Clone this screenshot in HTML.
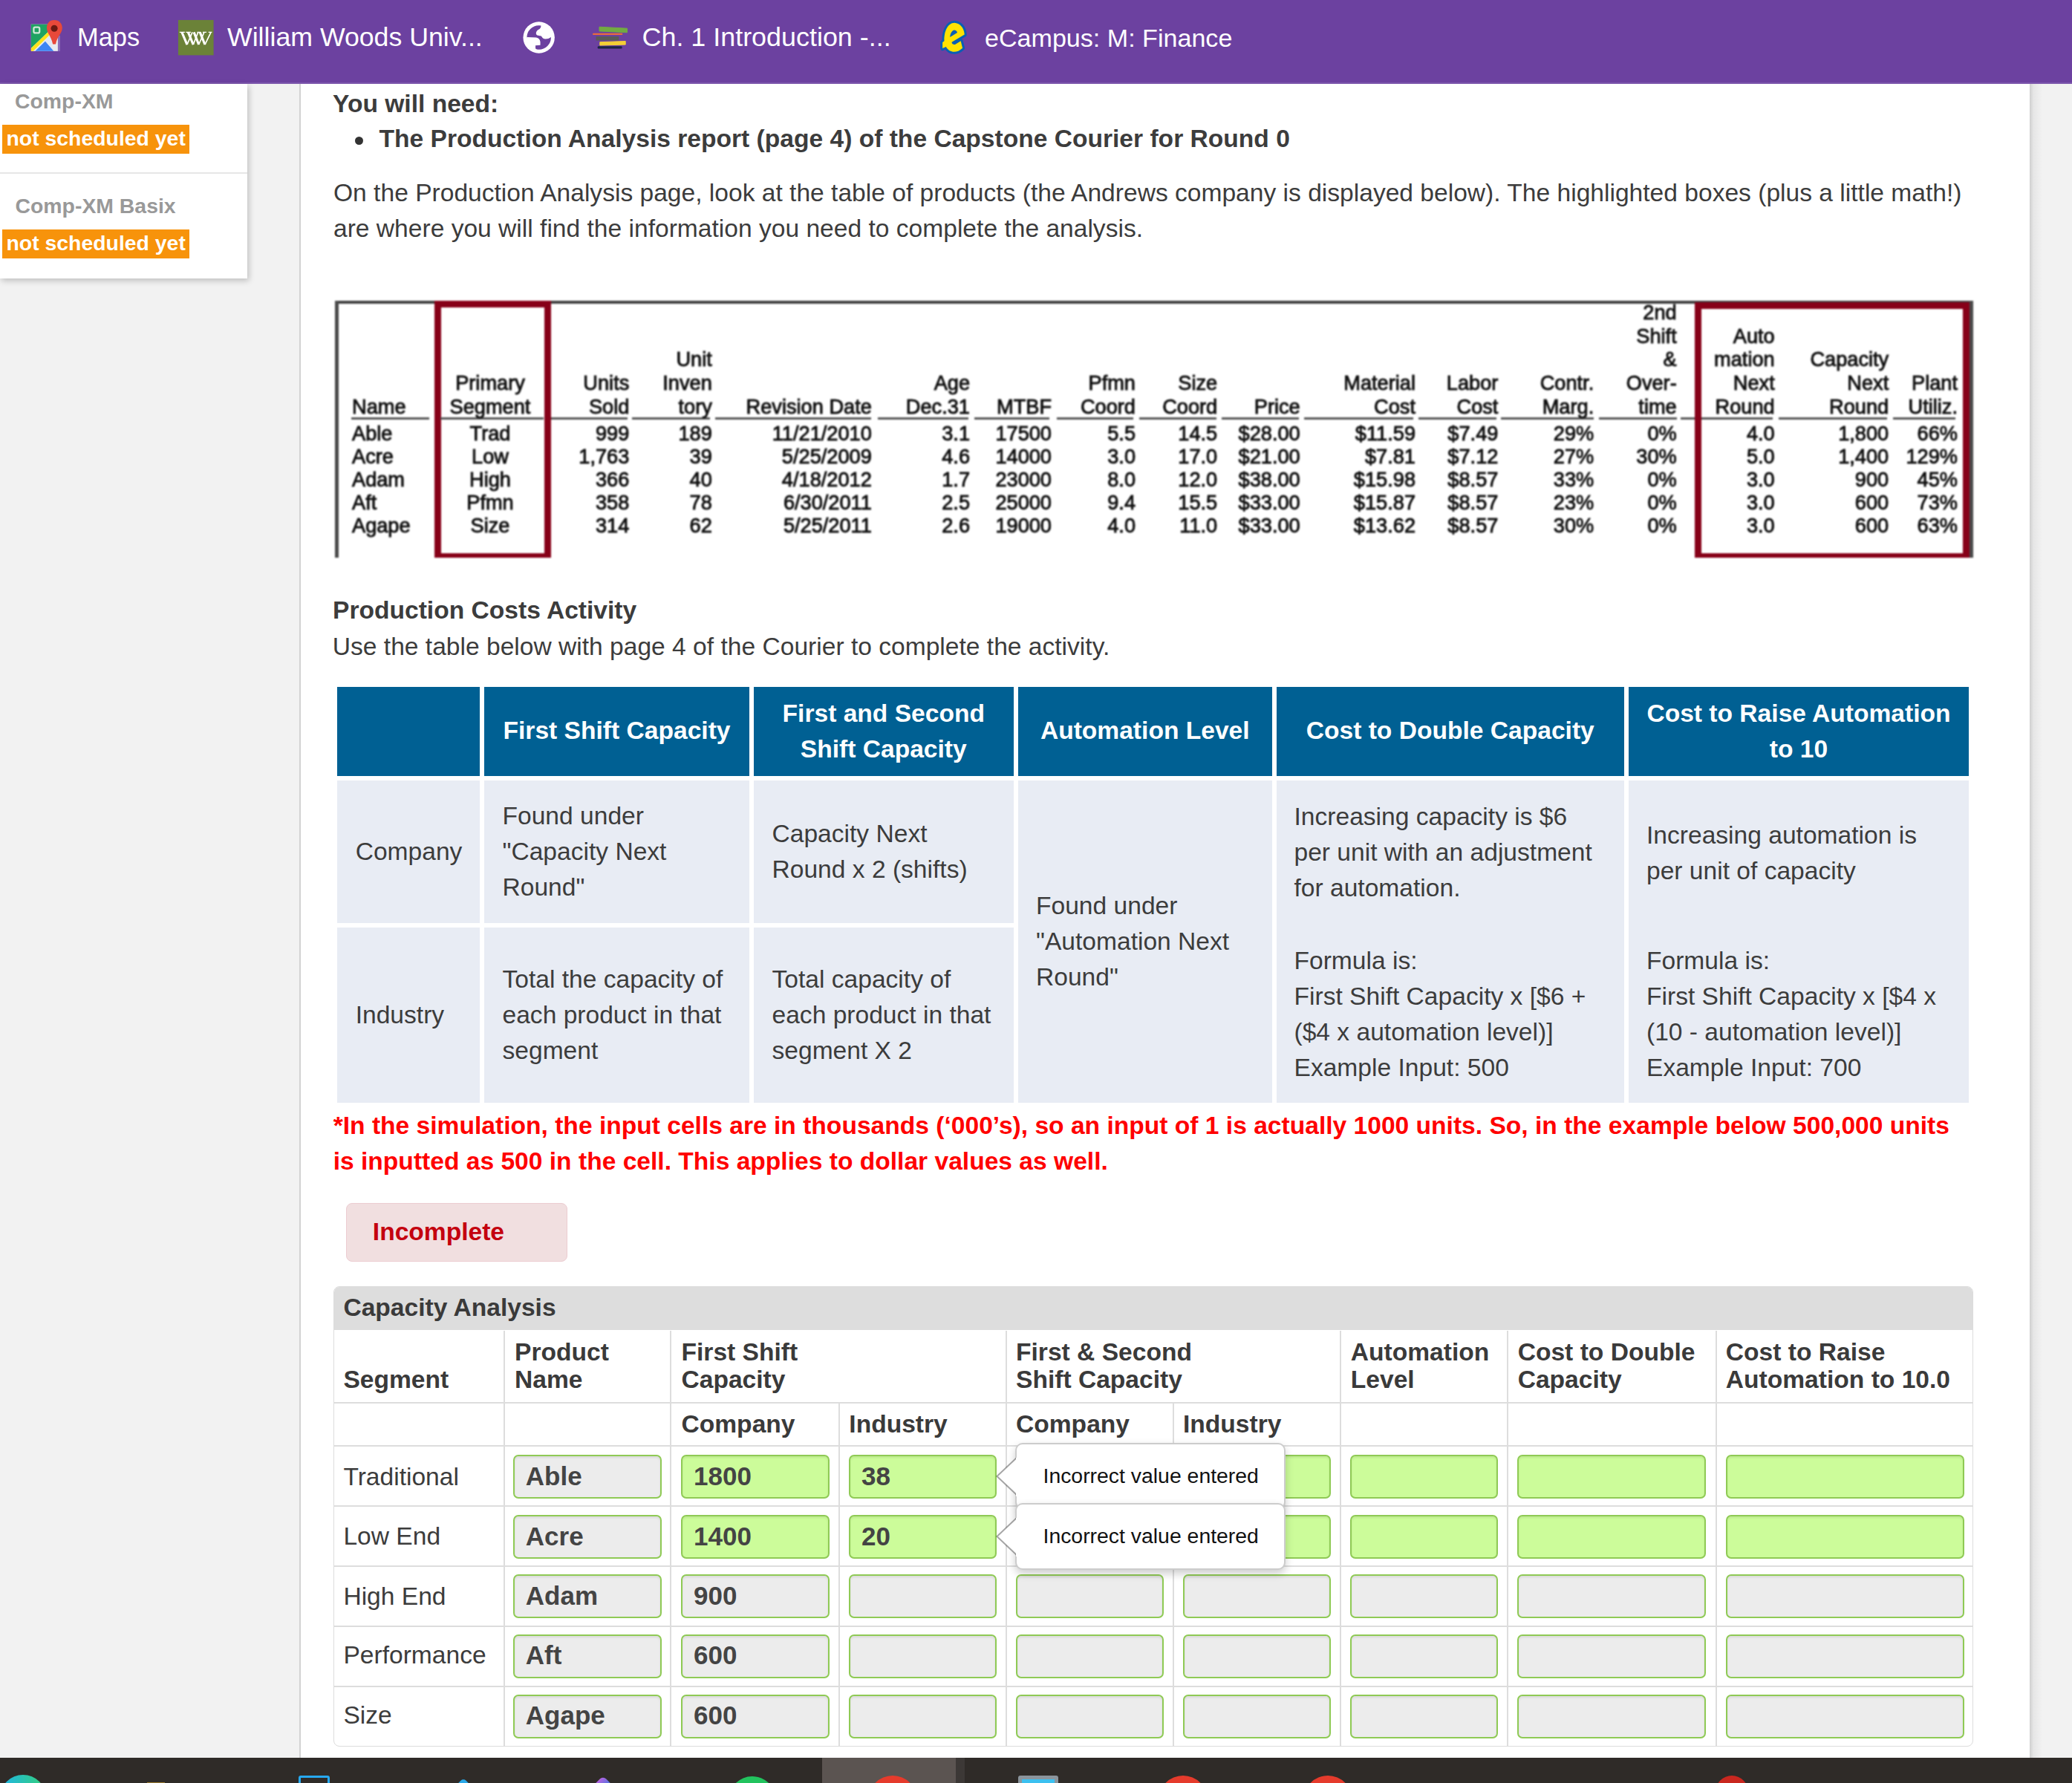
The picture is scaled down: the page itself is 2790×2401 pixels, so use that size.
<!DOCTYPE html>
<html><head><meta charset="utf-8"><title>Production Costs Activity</title>
<style>
html,body{margin:0;padding:0;}
body{width:2790px;height:2401px;overflow:hidden;position:relative;background:#f2f2f2;font-family:"Liberation Sans",sans-serif;color:#333;}
.t{position:absolute;white-space:nowrap;}
.r{position:absolute;box-sizing:border-box;}
.it{color:#151515;}
.tb{-webkit-text-stroke:0.9px #0e0e0e;}
</style></head><body>

<div class="r" style="left:0.00px;top:0.00px;width:2790.00px;height:113.00px;background:#6c41a0;"></div>
<div class="r" style="left:0.00px;top:111.00px;width:2790.00px;height:2.00px;background:#7d58ad;"></div>
<div class="t" style="left:104.00px;top:29.28px;font-size:34.4px;line-height:43.0px;color:#fff;">Maps</div>
<div class="t" style="left:306.00px;top:28.02px;font-size:35.7px;line-height:44.62px;color:#fff;">William Woods Univ...</div>
<div class="t" style="left:864.50px;top:27.82px;font-size:35.9px;line-height:44.88px;color:#fff;">Ch. 1 Introduction -...</div>
<div class="t" style="left:1326.00px;top:29.57px;font-size:34.1px;line-height:42.62px;color:#fff;">eCampus: M: Finance</div>
<svg class="r" style="left:35px;top:22px" width="60" height="58" viewBox="0 0 1844 1783">
<rect x="210" y="330" width="1110" height="1110" fill="#e9ecef"/>
<polygon points="210,330 900,330 900,660 210,1320" fill="#1ea362"/>
<polygon points="210,1320 900,660 960,700 960,790 300,1440 210,1440" fill="#ffe31a"/>
<polygon points="380,1440 800,1030 1150,1440" fill="#3d86f5"/>
<polygon points="800,1030 960,790 1060,880 1060,1250 1150,1440" fill="#dfe8f5"/>
<rect x="1320" y="800" width="90" height="640" fill="#8a70b8"/>
<path d="M1170 150 C1380 150 1500 300 1500 480 C1500 700 1300 820 1230 1150 L1110 1150 C1040 820 860 700 860 480 C860 300 960 150 1170 150 Z" fill="#e8493a"/>
<circle cx="1170" cy="500" r="140" fill="#6b1a12"/>
<rect x="320" y="450" width="240" height="240" rx="60" fill="none" stroke="#cfe8d8" stroke-width="70"/>
</svg>
<svg class="r" style="left:230px;top:20px" width="70" height="60" viewBox="0 0 2072 1776">
<rect x="295" y="205" width="1410" height="1405" fill="#6b8238"/>
<g stroke="#fff" stroke-linecap="butt" fill="none">
<path d="M440,690 L650,1185 M690,690 L895,1185 M920,690 L1115,1185 M1160,690 L1360,1185" stroke-width="92"/>
<path d="M650,1185 L860,690 M895,1185 L1090,690 M1115,1185 L1330,690 M1360,1185 L1600,690" stroke-width="50"/>
<path d="M350,690 H560 M600,690 H800 M1050,690 H1180 M1270,690 H1420 M1500,690 H1640" stroke-width="40"/>
</g>
</svg>
<svg class="r" style="left:695px;top:22px" width="60" height="58" viewBox="0 0 1844 1783">
<circle cx="942" cy="877" r="652" fill="#fff"/>
<circle cx="942" cy="877" r="500" fill="#6c41a0"/>
<path d="M1030 370 C1030 470 990 520 930 545 C860 580 815 650 825 720 C835 790 930 800 1010 805 C1060 815 1080 880 1110 910 C1180 960 1340 940 1445 860 L1520 700 L1400 420 L1100 330 Z" fill="#fff"/>
<path d="M440 860 L830 875 C930 890 990 960 1000 1060 L1000 1195 L800 1210 L800 1330 L880 1400 L560 1300 L420 1000 Z" fill="#fff"/>
</svg>
<svg class="r" style="left:797px;top:35px" width="49" height="32" viewBox="0 0 49 32">
<polygon points="10,1.2 47.5,3.2 47.5,8.8 10,6.9" fill="#72aa42" stroke="#72aa42" stroke-width="1" stroke-linejoin="round"/>
<rect x="1" y="9.8" width="40.3" height="2.3" rx="1" fill="#e96a3e"/>
<rect x="5.5" y="14.1" width="30.8" height="5.4" fill="#5a5a57"/>
<polygon points="10.8,21.7 45.2,20.5 45.2,25.1 10.8,26" fill="#f4cf35" stroke="#f4cf35" stroke-width="1" stroke-linejoin="round"/>
<rect x="7.7" y="27.3" width="32.9" height="3.1" rx="1.2" fill="#1c2544"/>
</svg>
<svg class="r" style="left:1255px;top:20px" width="60" height="60" viewBox="0 0 1783 1783">
<path d="M900,320 C1100,330 1280,500 1300,790 L790,1090 C780,1160 850,1200 920,1190 L1150,1050 L1220,1330 C1100,1440 1000,1480 880,1480 C760,1480 640,1420 560,1280 L420,1340 L420,1100 L490,1050 C480,700 600,330 900,320 Z" fill="#0a5fb4" stroke="#0a5fb4" stroke-width="180" stroke-linejoin="round"/>
<path d="M900,320 C1100,330 1280,500 1300,790 L790,1090 C780,1160 850,1200 920,1190 L1150,1050 L1220,1330 C1100,1440 1000,1480 880,1480 C760,1480 640,1420 560,1280 L420,1340 L420,1100 L490,1050 C480,700 600,330 900,320 Z" fill="#ffe200"/>
<path d="M720,890 C720,760 800,620 890,610 C950,610 1000,650 1010,710 Z" fill="#0a5fb4"/>
</svg>
<div class="r" style="left:404.00px;top:113.00px;width:2329.00px;height:2254.00px;background:#fff;"></div>
<div class="r" style="left:403.00px;top:113.00px;width:2.00px;height:2254.00px;background:#d2d2d2;"></div>
<div class="r" style="left:2733.00px;top:113.00px;width:17.00px;height:2254.00px;background:linear-gradient(to right,#cfcfcf,#e6e6e6 30%,#f2f2f2);"></div>
<div class="r" style="left:0;top:113px;width:333px;height:262px;background:#fff;box-shadow:2px 3px 8px rgba(0,0,0,.22);"></div>
<div class="t" style="left:20.00px;top:119.01px;font-size:28.4px;line-height:35.5px;font-weight:bold;color:#999;">Comp-XM</div>
<div class="r" style="left:3.00px;top:168.00px;width:252.00px;height:39.00px;background:#f7930b;"></div>
<div class="t" style="left:8.50px;top:168.71px;font-size:28.4px;line-height:35.5px;font-weight:bold;color:#fff;">not scheduled yet</div>
<div class="r" style="left:0.00px;top:232.00px;width:333.00px;height:2.00px;background:#e6e6e6;"></div>
<div class="t" style="left:20.50px;top:259.91px;font-size:28.4px;line-height:35.5px;font-weight:bold;color:#999;">Comp-XM Basix</div>
<div class="r" style="left:3.00px;top:309.00px;width:252.00px;height:38.50px;background:#f7930b;"></div>
<div class="t" style="left:8.50px;top:309.51px;font-size:28.4px;line-height:35.5px;font-weight:bold;color:#fff;">not scheduled yet</div>
<div class="t" style="left:448.00px;top:118.66px;font-size:33.6px;line-height:42.0px;font-weight:bold;color:#3c3c3c;">You will need:</div>
<div class="r" style="left:478px;top:184px;width:11px;height:11px;border-radius:50%;background:#333;"></div>
<div class="t" style="left:510.50px;top:166.36px;font-size:33.6px;line-height:42.0px;font-weight:bold;color:#3c3c3c;">The Production Analysis report (page 4) of the Capstone Courier for Round 0</div>
<div class="t" style="left:449.00px;top:239.16px;font-size:33.6px;line-height:42.0px;color:#3c3c3c;">On the Production Analysis page, look at the table of products (the Andrews company is displayed below). The highlighted boxes (plus a little math!)</div>
<div class="t" style="left:449.00px;top:286.76px;font-size:33.6px;line-height:42.0px;color:#3c3c3c;">are where you will find the information you need to complete the analysis.</div>
<div style="position:absolute;left:0;top:0;width:2790px;height:800px;filter:blur(0.8px);">
<div class="r" style="left:451.00px;top:405.00px;width:2206.00px;height:3.50px;background:#404040;"></div>
<div class="r" style="left:451.00px;top:405.00px;width:4.50px;height:346.00px;background:#4a4a4a;"></div>
<div class="r" style="left:2652.00px;top:405.00px;width:5.00px;height:346.00px;background:#4a4a4a;"></div>
<div class="r" style="left:584.5px;top:405px;width:157px;height:346px;border:9px solid #870018;border-bottom-width:6.5px;"></div>
<div class="r" style="left:2281.5px;top:407px;width:370px;height:344px;border:9px solid #870018;border-bottom-width:6.5px;"></div>
<div class="r" style="left:473.00px;top:562.30px;width:105.40px;height:2.30px;background:#555;"></div>
<div class="r" style="left:593.00px;top:562.30px;width:139.00px;height:2.30px;background:#555;"></div>
<div class="r" style="left:741.50px;top:562.30px;width:103.20px;height:2.30px;background:#555;"></div>
<div class="r" style="left:851.30px;top:562.30px;width:104.90px;height:2.30px;background:#555;"></div>
<div class="r" style="left:962.80px;top:562.30px;width:210.20px;height:2.30px;background:#555;"></div>
<div class="r" style="left:1181.60px;top:562.30px;width:122.20px;height:2.30px;background:#555;"></div>
<div class="r" style="left:1311.90px;top:562.30px;width:101.40px;height:2.30px;background:#555;"></div>
<div class="r" style="left:1423.40px;top:562.30px;width:102.80px;height:2.30px;background:#555;"></div>
<div class="r" style="left:1533.50px;top:562.30px;width:104.20px;height:2.30px;background:#555;"></div>
<div class="r" style="left:1645.00px;top:562.30px;width:104.20px;height:2.30px;background:#555;"></div>
<div class="r" style="left:1756.00px;top:562.30px;width:147.30px;height:2.30px;background:#555;"></div>
<div class="r" style="left:1909.90px;top:562.30px;width:104.90px;height:2.30px;background:#555;"></div>
<div class="r" style="left:2021.40px;top:562.30px;width:124.80px;height:2.30px;background:#555;"></div>
<div class="r" style="left:2152.80px;top:562.30px;width:104.90px;height:2.30px;background:#555;"></div>
<div class="r" style="left:2263.00px;top:562.30px;width:18.50px;height:2.30px;background:#555;"></div>
<div class="r" style="left:2290.50px;top:562.30px;width:96.30px;height:2.30px;background:#555;"></div>
<div class="r" style="left:2394.50px;top:562.30px;width:146.70px;height:2.30px;background:#555;"></div>
<div class="r" style="left:2549.00px;top:562.30px;width:84.00px;height:2.30px;background:#555;"></div>
<div class="t tb" style="left:474.00px;top:530.58px;font-size:27.2px;line-height:34.0px;color:#0e0e0e;">Name</div>
<div class="t tb" style="left:60.00px;width:1200px;top:499.08px;font-size:27.2px;line-height:34.0px;text-align:center;color:#0e0e0e;">Primary</div>
<div class="t tb" style="left:60.00px;width:1200px;top:530.58px;font-size:27.2px;line-height:34.0px;text-align:center;color:#0e0e0e;">Segment</div>
<div class="t tb" style="right:1942.70px;top:499.08px;font-size:27.2px;line-height:34.0px;text-align:right;color:#0e0e0e;">Units</div>
<div class="t tb" style="right:1942.70px;top:530.58px;font-size:27.2px;line-height:34.0px;text-align:right;color:#0e0e0e;">Sold</div>
<div class="t tb" style="right:1831.20px;top:466.88px;font-size:27.2px;line-height:34.0px;text-align:right;color:#0e0e0e;">Unit</div>
<div class="t tb" style="right:1831.20px;top:499.08px;font-size:27.2px;line-height:34.0px;text-align:right;color:#0e0e0e;">Inven</div>
<div class="t tb" style="right:1831.20px;top:530.58px;font-size:27.2px;line-height:34.0px;text-align:right;color:#0e0e0e;">tory</div>
<div class="t tb" style="right:1616.20px;top:530.58px;font-size:27.2px;line-height:34.0px;text-align:right;color:#0e0e0e;">Revision Date</div>
<div class="t tb" style="right:1484.00px;top:499.08px;font-size:27.2px;line-height:34.0px;text-align:right;color:#0e0e0e;">Age</div>
<div class="t tb" style="right:1484.00px;top:530.58px;font-size:27.2px;line-height:34.0px;text-align:right;color:#0e0e0e;">Dec.31</div>
<div class="t tb" style="right:1374.00px;top:530.58px;font-size:27.2px;line-height:34.0px;text-align:right;color:#0e0e0e;">MTBF</div>
<div class="t tb" style="right:1261.00px;top:499.08px;font-size:27.2px;line-height:34.0px;text-align:right;color:#0e0e0e;">Pfmn</div>
<div class="t tb" style="right:1261.00px;top:530.58px;font-size:27.2px;line-height:34.0px;text-align:right;color:#0e0e0e;">Coord</div>
<div class="t tb" style="right:1150.80px;top:499.08px;font-size:27.2px;line-height:34.0px;text-align:right;color:#0e0e0e;">Size</div>
<div class="t tb" style="right:1150.80px;top:530.58px;font-size:27.2px;line-height:34.0px;text-align:right;color:#0e0e0e;">Coord</div>
<div class="t tb" style="right:1039.30px;top:530.58px;font-size:27.2px;line-height:34.0px;text-align:right;color:#0e0e0e;">Price</div>
<div class="t tb" style="right:884.00px;top:499.08px;font-size:27.2px;line-height:34.0px;text-align:right;color:#0e0e0e;">Material</div>
<div class="t tb" style="right:884.00px;top:530.58px;font-size:27.2px;line-height:34.0px;text-align:right;color:#0e0e0e;">Cost</div>
<div class="t tb" style="right:772.60px;top:499.08px;font-size:27.2px;line-height:34.0px;text-align:right;color:#0e0e0e;">Labor</div>
<div class="t tb" style="right:772.60px;top:530.58px;font-size:27.2px;line-height:34.0px;text-align:right;color:#0e0e0e;">Cost</div>
<div class="t tb" style="right:643.80px;top:499.08px;font-size:27.2px;line-height:34.0px;text-align:right;color:#0e0e0e;">Contr.</div>
<div class="t tb" style="right:643.80px;top:530.58px;font-size:27.2px;line-height:34.0px;text-align:right;color:#0e0e0e;">Marg.</div>
<div class="t tb" style="right:532.30px;top:403.88px;font-size:27.2px;line-height:34.0px;text-align:right;color:#0e0e0e;">2nd</div>
<div class="t tb" style="right:532.30px;top:435.58px;font-size:27.2px;line-height:34.0px;text-align:right;color:#0e0e0e;">Shift</div>
<div class="t tb" style="right:532.30px;top:466.88px;font-size:27.2px;line-height:34.0px;text-align:right;color:#0e0e0e;">&amp;</div>
<div class="t tb" style="right:532.30px;top:499.08px;font-size:27.2px;line-height:34.0px;text-align:right;color:#0e0e0e;">Over-</div>
<div class="t tb" style="right:532.30px;top:530.58px;font-size:27.2px;line-height:34.0px;text-align:right;color:#0e0e0e;">time</div>
<div class="t tb" style="right:400.30px;top:435.58px;font-size:27.2px;line-height:34.0px;text-align:right;color:#0e0e0e;">Auto</div>
<div class="t tb" style="right:400.30px;top:466.88px;font-size:27.2px;line-height:34.0px;text-align:right;color:#0e0e0e;">mation</div>
<div class="t tb" style="right:400.30px;top:499.08px;font-size:27.2px;line-height:34.0px;text-align:right;color:#0e0e0e;">Next</div>
<div class="t tb" style="right:400.30px;top:530.58px;font-size:27.2px;line-height:34.0px;text-align:right;color:#0e0e0e;">Round</div>
<div class="t tb" style="right:246.80px;top:466.88px;font-size:27.2px;line-height:34.0px;text-align:right;color:#0e0e0e;">Capacity</div>
<div class="t tb" style="right:246.80px;top:499.08px;font-size:27.2px;line-height:34.0px;text-align:right;color:#0e0e0e;">Next</div>
<div class="t tb" style="right:246.80px;top:530.58px;font-size:27.2px;line-height:34.0px;text-align:right;color:#0e0e0e;">Round</div>
<div class="t tb" style="right:154.00px;top:499.08px;font-size:27.2px;line-height:34.0px;text-align:right;color:#0e0e0e;">Plant</div>
<div class="t tb" style="right:154.00px;top:530.58px;font-size:27.2px;line-height:34.0px;text-align:right;color:#0e0e0e;">Utiliz.</div>
<div class="t tb" style="left:474.00px;top:566.88px;font-size:27.2px;line-height:34.0px;color:#0e0e0e;">Able</div>
<div class="t tb" style="left:60.00px;width:1200px;top:566.88px;font-size:27.2px;line-height:34.0px;text-align:center;color:#0e0e0e;">Trad</div>
<div class="t tb" style="right:1942.70px;top:566.88px;font-size:27.2px;line-height:34.0px;text-align:right;color:#0e0e0e;">999</div>
<div class="t tb" style="right:1831.20px;top:566.88px;font-size:27.2px;line-height:34.0px;text-align:right;color:#0e0e0e;">189</div>
<div class="t tb" style="right:1616.20px;top:566.88px;font-size:27.2px;line-height:34.0px;text-align:right;color:#0e0e0e;">11/21/2010</div>
<div class="t tb" style="right:1484.00px;top:566.88px;font-size:27.2px;line-height:34.0px;text-align:right;color:#0e0e0e;">3.1</div>
<div class="t tb" style="right:1374.00px;top:566.88px;font-size:27.2px;line-height:34.0px;text-align:right;color:#0e0e0e;">17500</div>
<div class="t tb" style="right:1261.00px;top:566.88px;font-size:27.2px;line-height:34.0px;text-align:right;color:#0e0e0e;">5.5</div>
<div class="t tb" style="right:1150.80px;top:566.88px;font-size:27.2px;line-height:34.0px;text-align:right;color:#0e0e0e;">14.5</div>
<div class="t tb" style="right:1039.30px;top:566.88px;font-size:27.2px;line-height:34.0px;text-align:right;color:#0e0e0e;">$28.00</div>
<div class="t tb" style="right:884.00px;top:566.88px;font-size:27.2px;line-height:34.0px;text-align:right;color:#0e0e0e;">$11.59</div>
<div class="t tb" style="right:772.60px;top:566.88px;font-size:27.2px;line-height:34.0px;text-align:right;color:#0e0e0e;">$7.49</div>
<div class="t tb" style="right:643.80px;top:566.88px;font-size:27.2px;line-height:34.0px;text-align:right;color:#0e0e0e;">29%</div>
<div class="t tb" style="right:532.30px;top:566.88px;font-size:27.2px;line-height:34.0px;text-align:right;color:#0e0e0e;">0%</div>
<div class="t tb" style="right:400.30px;top:566.88px;font-size:27.2px;line-height:34.0px;text-align:right;color:#0e0e0e;">4.0</div>
<div class="t tb" style="right:246.80px;top:566.88px;font-size:27.2px;line-height:34.0px;text-align:right;color:#0e0e0e;">1,800</div>
<div class="t tb" style="right:154.00px;top:566.88px;font-size:27.2px;line-height:34.0px;text-align:right;color:#0e0e0e;">66%</div>
<div class="t tb" style="left:474.00px;top:597.93px;font-size:27.2px;line-height:34.0px;color:#0e0e0e;">Acre</div>
<div class="t tb" style="left:60.00px;width:1200px;top:597.93px;font-size:27.2px;line-height:34.0px;text-align:center;color:#0e0e0e;">Low</div>
<div class="t tb" style="right:1942.70px;top:597.93px;font-size:27.2px;line-height:34.0px;text-align:right;color:#0e0e0e;">1,763</div>
<div class="t tb" style="right:1831.20px;top:597.93px;font-size:27.2px;line-height:34.0px;text-align:right;color:#0e0e0e;">39</div>
<div class="t tb" style="right:1616.20px;top:597.93px;font-size:27.2px;line-height:34.0px;text-align:right;color:#0e0e0e;">5/25/2009</div>
<div class="t tb" style="right:1484.00px;top:597.93px;font-size:27.2px;line-height:34.0px;text-align:right;color:#0e0e0e;">4.6</div>
<div class="t tb" style="right:1374.00px;top:597.93px;font-size:27.2px;line-height:34.0px;text-align:right;color:#0e0e0e;">14000</div>
<div class="t tb" style="right:1261.00px;top:597.93px;font-size:27.2px;line-height:34.0px;text-align:right;color:#0e0e0e;">3.0</div>
<div class="t tb" style="right:1150.80px;top:597.93px;font-size:27.2px;line-height:34.0px;text-align:right;color:#0e0e0e;">17.0</div>
<div class="t tb" style="right:1039.30px;top:597.93px;font-size:27.2px;line-height:34.0px;text-align:right;color:#0e0e0e;">$21.00</div>
<div class="t tb" style="right:884.00px;top:597.93px;font-size:27.2px;line-height:34.0px;text-align:right;color:#0e0e0e;">$7.81</div>
<div class="t tb" style="right:772.60px;top:597.93px;font-size:27.2px;line-height:34.0px;text-align:right;color:#0e0e0e;">$7.12</div>
<div class="t tb" style="right:643.80px;top:597.93px;font-size:27.2px;line-height:34.0px;text-align:right;color:#0e0e0e;">27%</div>
<div class="t tb" style="right:532.30px;top:597.93px;font-size:27.2px;line-height:34.0px;text-align:right;color:#0e0e0e;">30%</div>
<div class="t tb" style="right:400.30px;top:597.93px;font-size:27.2px;line-height:34.0px;text-align:right;color:#0e0e0e;">5.0</div>
<div class="t tb" style="right:246.80px;top:597.93px;font-size:27.2px;line-height:34.0px;text-align:right;color:#0e0e0e;">1,400</div>
<div class="t tb" style="right:154.00px;top:597.93px;font-size:27.2px;line-height:34.0px;text-align:right;color:#0e0e0e;">129%</div>
<div class="t tb" style="left:474.00px;top:628.98px;font-size:27.2px;line-height:34.0px;color:#0e0e0e;">Adam</div>
<div class="t tb" style="left:60.00px;width:1200px;top:628.98px;font-size:27.2px;line-height:34.0px;text-align:center;color:#0e0e0e;">High</div>
<div class="t tb" style="right:1942.70px;top:628.98px;font-size:27.2px;line-height:34.0px;text-align:right;color:#0e0e0e;">366</div>
<div class="t tb" style="right:1831.20px;top:628.98px;font-size:27.2px;line-height:34.0px;text-align:right;color:#0e0e0e;">40</div>
<div class="t tb" style="right:1616.20px;top:628.98px;font-size:27.2px;line-height:34.0px;text-align:right;color:#0e0e0e;">4/18/2012</div>
<div class="t tb" style="right:1484.00px;top:628.98px;font-size:27.2px;line-height:34.0px;text-align:right;color:#0e0e0e;">1.7</div>
<div class="t tb" style="right:1374.00px;top:628.98px;font-size:27.2px;line-height:34.0px;text-align:right;color:#0e0e0e;">23000</div>
<div class="t tb" style="right:1261.00px;top:628.98px;font-size:27.2px;line-height:34.0px;text-align:right;color:#0e0e0e;">8.0</div>
<div class="t tb" style="right:1150.80px;top:628.98px;font-size:27.2px;line-height:34.0px;text-align:right;color:#0e0e0e;">12.0</div>
<div class="t tb" style="right:1039.30px;top:628.98px;font-size:27.2px;line-height:34.0px;text-align:right;color:#0e0e0e;">$38.00</div>
<div class="t tb" style="right:884.00px;top:628.98px;font-size:27.2px;line-height:34.0px;text-align:right;color:#0e0e0e;">$15.98</div>
<div class="t tb" style="right:772.60px;top:628.98px;font-size:27.2px;line-height:34.0px;text-align:right;color:#0e0e0e;">$8.57</div>
<div class="t tb" style="right:643.80px;top:628.98px;font-size:27.2px;line-height:34.0px;text-align:right;color:#0e0e0e;">33%</div>
<div class="t tb" style="right:532.30px;top:628.98px;font-size:27.2px;line-height:34.0px;text-align:right;color:#0e0e0e;">0%</div>
<div class="t tb" style="right:400.30px;top:628.98px;font-size:27.2px;line-height:34.0px;text-align:right;color:#0e0e0e;">3.0</div>
<div class="t tb" style="right:246.80px;top:628.98px;font-size:27.2px;line-height:34.0px;text-align:right;color:#0e0e0e;">900</div>
<div class="t tb" style="right:154.00px;top:628.98px;font-size:27.2px;line-height:34.0px;text-align:right;color:#0e0e0e;">45%</div>
<div class="t tb" style="left:474.00px;top:660.03px;font-size:27.2px;line-height:34.0px;color:#0e0e0e;">Aft</div>
<div class="t tb" style="left:60.00px;width:1200px;top:660.03px;font-size:27.2px;line-height:34.0px;text-align:center;color:#0e0e0e;">Pfmn</div>
<div class="t tb" style="right:1942.70px;top:660.03px;font-size:27.2px;line-height:34.0px;text-align:right;color:#0e0e0e;">358</div>
<div class="t tb" style="right:1831.20px;top:660.03px;font-size:27.2px;line-height:34.0px;text-align:right;color:#0e0e0e;">78</div>
<div class="t tb" style="right:1616.20px;top:660.03px;font-size:27.2px;line-height:34.0px;text-align:right;color:#0e0e0e;">6/30/2011</div>
<div class="t tb" style="right:1484.00px;top:660.03px;font-size:27.2px;line-height:34.0px;text-align:right;color:#0e0e0e;">2.5</div>
<div class="t tb" style="right:1374.00px;top:660.03px;font-size:27.2px;line-height:34.0px;text-align:right;color:#0e0e0e;">25000</div>
<div class="t tb" style="right:1261.00px;top:660.03px;font-size:27.2px;line-height:34.0px;text-align:right;color:#0e0e0e;">9.4</div>
<div class="t tb" style="right:1150.80px;top:660.03px;font-size:27.2px;line-height:34.0px;text-align:right;color:#0e0e0e;">15.5</div>
<div class="t tb" style="right:1039.30px;top:660.03px;font-size:27.2px;line-height:34.0px;text-align:right;color:#0e0e0e;">$33.00</div>
<div class="t tb" style="right:884.00px;top:660.03px;font-size:27.2px;line-height:34.0px;text-align:right;color:#0e0e0e;">$15.87</div>
<div class="t tb" style="right:772.60px;top:660.03px;font-size:27.2px;line-height:34.0px;text-align:right;color:#0e0e0e;">$8.57</div>
<div class="t tb" style="right:643.80px;top:660.03px;font-size:27.2px;line-height:34.0px;text-align:right;color:#0e0e0e;">23%</div>
<div class="t tb" style="right:532.30px;top:660.03px;font-size:27.2px;line-height:34.0px;text-align:right;color:#0e0e0e;">0%</div>
<div class="t tb" style="right:400.30px;top:660.03px;font-size:27.2px;line-height:34.0px;text-align:right;color:#0e0e0e;">3.0</div>
<div class="t tb" style="right:246.80px;top:660.03px;font-size:27.2px;line-height:34.0px;text-align:right;color:#0e0e0e;">600</div>
<div class="t tb" style="right:154.00px;top:660.03px;font-size:27.2px;line-height:34.0px;text-align:right;color:#0e0e0e;">73%</div>
<div class="t tb" style="left:474.00px;top:691.08px;font-size:27.2px;line-height:34.0px;color:#0e0e0e;">Agape</div>
<div class="t tb" style="left:60.00px;width:1200px;top:691.08px;font-size:27.2px;line-height:34.0px;text-align:center;color:#0e0e0e;">Size</div>
<div class="t tb" style="right:1942.70px;top:691.08px;font-size:27.2px;line-height:34.0px;text-align:right;color:#0e0e0e;">314</div>
<div class="t tb" style="right:1831.20px;top:691.08px;font-size:27.2px;line-height:34.0px;text-align:right;color:#0e0e0e;">62</div>
<div class="t tb" style="right:1616.20px;top:691.08px;font-size:27.2px;line-height:34.0px;text-align:right;color:#0e0e0e;">5/25/2011</div>
<div class="t tb" style="right:1484.00px;top:691.08px;font-size:27.2px;line-height:34.0px;text-align:right;color:#0e0e0e;">2.6</div>
<div class="t tb" style="right:1374.00px;top:691.08px;font-size:27.2px;line-height:34.0px;text-align:right;color:#0e0e0e;">19000</div>
<div class="t tb" style="right:1261.00px;top:691.08px;font-size:27.2px;line-height:34.0px;text-align:right;color:#0e0e0e;">4.0</div>
<div class="t tb" style="right:1150.80px;top:691.08px;font-size:27.2px;line-height:34.0px;text-align:right;color:#0e0e0e;">11.0</div>
<div class="t tb" style="right:1039.30px;top:691.08px;font-size:27.2px;line-height:34.0px;text-align:right;color:#0e0e0e;">$33.00</div>
<div class="t tb" style="right:884.00px;top:691.08px;font-size:27.2px;line-height:34.0px;text-align:right;color:#0e0e0e;">$13.62</div>
<div class="t tb" style="right:772.60px;top:691.08px;font-size:27.2px;line-height:34.0px;text-align:right;color:#0e0e0e;">$8.57</div>
<div class="t tb" style="right:643.80px;top:691.08px;font-size:27.2px;line-height:34.0px;text-align:right;color:#0e0e0e;">30%</div>
<div class="t tb" style="right:532.30px;top:691.08px;font-size:27.2px;line-height:34.0px;text-align:right;color:#0e0e0e;">0%</div>
<div class="t tb" style="right:400.30px;top:691.08px;font-size:27.2px;line-height:34.0px;text-align:right;color:#0e0e0e;">3.0</div>
<div class="t tb" style="right:246.80px;top:691.08px;font-size:27.2px;line-height:34.0px;text-align:right;color:#0e0e0e;">600</div>
<div class="t tb" style="right:154.00px;top:691.08px;font-size:27.2px;line-height:34.0px;text-align:right;color:#0e0e0e;">63%</div>
</div>
<div class="t" style="left:448.00px;top:801.36px;font-size:33.6px;line-height:42.0px;font-weight:bold;color:#3c3c3c;">Production Costs Activity</div>
<div class="t" style="left:447.80px;top:849.86px;font-size:33.6px;line-height:42.0px;color:#3c3c3c;">Use the table below with page 4 of the Courier to complete the activity.</div>
<div class="r" style="left:454.00px;top:925.00px;width:192.00px;height:120.00px;background:#006093;"></div>
<div class="r" style="left:652.00px;top:925.00px;width:357.00px;height:120.00px;background:#006093;"></div>
<div class="r" style="left:1015.00px;top:925.00px;width:349.50px;height:120.00px;background:#006093;"></div>
<div class="r" style="left:1370.50px;top:925.00px;width:342.50px;height:120.00px;background:#006093;"></div>
<div class="r" style="left:1718.50px;top:925.00px;width:468.50px;height:120.00px;background:#006093;"></div>
<div class="r" style="left:2193.00px;top:925.00px;width:458.00px;height:120.00px;background:#006093;"></div>
<div class="r" style="left:454.00px;top:1051.30px;width:192.00px;height:191.70px;background:#e8ecf4;"></div>
<div class="r" style="left:454.00px;top:1249.30px;width:192.00px;height:235.70px;background:#e8ecf4;"></div>
<div class="r" style="left:652.00px;top:1051.30px;width:357.00px;height:191.70px;background:#e8ecf4;"></div>
<div class="r" style="left:652.00px;top:1249.30px;width:357.00px;height:235.70px;background:#e8ecf4;"></div>
<div class="r" style="left:1015.00px;top:1051.30px;width:349.50px;height:191.70px;background:#e8ecf4;"></div>
<div class="r" style="left:1015.00px;top:1249.30px;width:349.50px;height:235.70px;background:#e8ecf4;"></div>
<div class="r" style="left:1370.50px;top:1051.30px;width:342.50px;height:433.70px;background:#e8ecf4;"></div>
<div class="r" style="left:1718.50px;top:1051.30px;width:468.50px;height:433.70px;background:#e8ecf4;"></div>
<div class="r" style="left:2193.00px;top:1051.30px;width:458.00px;height:433.70px;background:#e8ecf4;"></div>
<div class="t" style="left:230.50px;width:1200px;top:963.16px;font-size:33.6px;line-height:42.0px;text-align:center;font-weight:bold;color:#fff;">First Shift Capacity</div>
<div class="t" style="left:589.75px;width:1200px;top:939.66px;font-size:33.6px;line-height:42.0px;text-align:center;font-weight:bold;color:#fff;">First and Second</div>
<div class="t" style="left:589.75px;width:1200px;top:987.96px;font-size:33.6px;line-height:42.0px;text-align:center;font-weight:bold;color:#fff;">Shift Capacity</div>
<div class="t" style="left:941.75px;width:1200px;top:963.16px;font-size:33.6px;line-height:42.0px;text-align:center;font-weight:bold;color:#fff;">Automation Level</div>
<div class="t" style="left:1352.75px;width:1200px;top:963.16px;font-size:33.6px;line-height:42.0px;text-align:center;font-weight:bold;color:#fff;">Cost to Double Capacity</div>
<div class="t" style="left:1822.00px;width:1200px;top:939.66px;font-size:33.6px;line-height:42.0px;text-align:center;font-weight:bold;color:#fff;">Cost to Raise Automation</div>
<div class="t" style="left:1822.00px;width:1200px;top:987.96px;font-size:33.6px;line-height:42.0px;text-align:center;font-weight:bold;color:#fff;">to 10</div>
<div class="t" style="left:478.70px;top:1125.56px;font-size:33.6px;line-height:42.0px;color:#3c3c3c;">Company</div>
<div class="t" style="left:478.70px;top:1346.16px;font-size:33.6px;line-height:42.0px;color:#3c3c3c;">Industry</div>
<div class="t" style="left:676.50px;top:1077.56px;font-size:33.6px;line-height:42.0px;color:#3c3c3c;">Found under</div>
<div class="t" style="left:676.50px;top:1125.56px;font-size:33.6px;line-height:42.0px;color:#3c3c3c;">"Capacity Next</div>
<div class="t" style="left:676.50px;top:1173.56px;font-size:33.6px;line-height:42.0px;color:#3c3c3c;">Round"</div>
<div class="t" style="left:1039.50px;top:1101.56px;font-size:33.6px;line-height:42.0px;color:#3c3c3c;">Capacity Next</div>
<div class="t" style="left:1039.50px;top:1149.56px;font-size:33.6px;line-height:42.0px;color:#3c3c3c;">Round x 2 (shifts)</div>
<div class="t" style="left:676.50px;top:1297.86px;font-size:33.6px;line-height:42.0px;color:#3c3c3c;">Total the capacity of</div>
<div class="t" style="left:676.50px;top:1345.86px;font-size:33.6px;line-height:42.0px;color:#3c3c3c;">each product in that</div>
<div class="t" style="left:676.50px;top:1393.86px;font-size:33.6px;line-height:42.0px;color:#3c3c3c;">segment</div>
<div class="t" style="left:1039.50px;top:1297.86px;font-size:33.6px;line-height:42.0px;color:#3c3c3c;">Total capacity of</div>
<div class="t" style="left:1039.50px;top:1345.86px;font-size:33.6px;line-height:42.0px;color:#3c3c3c;">each product in that</div>
<div class="t" style="left:1039.50px;top:1393.86px;font-size:33.6px;line-height:42.0px;color:#3c3c3c;">segment X 2</div>
<div class="t" style="left:1395.00px;top:1199.36px;font-size:33.6px;line-height:42.0px;color:#3c3c3c;">Found under</div>
<div class="t" style="left:1395.00px;top:1247.36px;font-size:33.6px;line-height:42.0px;color:#3c3c3c;">"Automation Next</div>
<div class="t" style="left:1395.00px;top:1295.36px;font-size:33.6px;line-height:42.0px;color:#3c3c3c;">Round"</div>
<div class="t" style="left:1742.50px;top:1079.36px;font-size:33.6px;line-height:42.0px;color:#3c3c3c;">Increasing capacity is $6</div>
<div class="t" style="left:1742.50px;top:1127.36px;font-size:33.6px;line-height:42.0px;color:#3c3c3c;">per unit with an adjustment</div>
<div class="t" style="left:1742.50px;top:1175.36px;font-size:33.6px;line-height:42.0px;color:#3c3c3c;">for automation.</div>
<div class="t" style="left:1742.50px;top:1272.86px;font-size:33.6px;line-height:42.0px;color:#3c3c3c;">Formula is:</div>
<div class="t" style="left:1742.50px;top:1320.86px;font-size:33.6px;line-height:42.0px;color:#3c3c3c;">First Shift Capacity x [$6 +</div>
<div class="t" style="left:1742.50px;top:1368.86px;font-size:33.6px;line-height:42.0px;color:#3c3c3c;">($4 x automation level)]</div>
<div class="t" style="left:1742.50px;top:1416.86px;font-size:33.6px;line-height:42.0px;color:#3c3c3c;">Example Input: 500</div>
<div class="t" style="left:2217.00px;top:1103.66px;font-size:33.6px;line-height:42.0px;color:#3c3c3c;">Increasing automation is</div>
<div class="t" style="left:2217.00px;top:1151.66px;font-size:33.6px;line-height:42.0px;color:#3c3c3c;">per unit of capacity</div>
<div class="t" style="left:2217.00px;top:1273.36px;font-size:33.6px;line-height:42.0px;color:#3c3c3c;">Formula is:</div>
<div class="t" style="left:2217.00px;top:1321.36px;font-size:33.6px;line-height:42.0px;color:#3c3c3c;">First Shift Capacity x [$4 x</div>
<div class="t" style="left:2217.00px;top:1369.36px;font-size:33.6px;line-height:42.0px;color:#3c3c3c;">(10 - automation level)]</div>
<div class="t" style="left:2217.00px;top:1417.36px;font-size:33.6px;line-height:42.0px;color:#3c3c3c;">Example Input: 700</div>
<div class="t" style="left:448.70px;top:1494.76px;font-size:33.6px;line-height:42.0px;font-weight:bold;color:#f00;">*In the simulation, the input cells are in thousands (‘000’s), so an input of 1 is actually 1000 units. So, in the example below 500,000 units</div>
<div class="t" style="left:448.70px;top:1542.96px;font-size:33.6px;line-height:42.0px;font-weight:bold;color:#f00;">is inputted as 500 in the cell. This applies to dollar values as well.</div>
<div class="r" style="left:466.2px;top:1619.9px;width:298px;height:79px;background:#f1dfe0;border:1.6px solid #ecccd1;border-radius:8px;"></div>
<div class="t" style="left:501.80px;top:1638.46px;font-size:33.6px;line-height:42.0px;font-weight:bold;color:#c4000e;">Incomplete</div>
<div class="r" style="left:448.5px;top:1732.3px;width:2208.5px;height:619.7px;border:1.8px solid #dcdcdc;border-radius:8px;background:#fff;overflow:hidden;"><div style="height:57.6px;background:#dddddd;"></div></div>
<div class="t" style="left:462.40px;top:1740.16px;font-size:33.6px;line-height:42.0px;font-weight:bold;color:#3a3a3a;">Capacity Analysis</div>
<div class="r" style="left:677.50px;top:1791.70px;width:2.00px;height:97.00px;background:#dddddd;"></div>
<div class="r" style="left:902.00px;top:1791.70px;width:2.00px;height:97.00px;background:#dddddd;"></div>
<div class="r" style="left:1354.00px;top:1791.70px;width:2.00px;height:97.00px;background:#dddddd;"></div>
<div class="r" style="left:1804.30px;top:1791.70px;width:2.00px;height:97.00px;background:#dddddd;"></div>
<div class="r" style="left:2028.70px;top:1791.70px;width:2.00px;height:97.00px;background:#dddddd;"></div>
<div class="r" style="left:2309.50px;top:1791.70px;width:2.00px;height:97.00px;background:#dddddd;"></div>
<div class="r" style="left:677.50px;top:1888.70px;width:2.00px;height:462.30px;background:#dddddd;"></div>
<div class="r" style="left:902.00px;top:1888.70px;width:2.00px;height:462.30px;background:#dddddd;"></div>
<div class="r" style="left:1128.80px;top:1888.70px;width:2.00px;height:462.30px;background:#dddddd;"></div>
<div class="r" style="left:1354.00px;top:1888.70px;width:2.00px;height:462.30px;background:#dddddd;"></div>
<div class="r" style="left:1579.00px;top:1888.70px;width:2.00px;height:462.30px;background:#dddddd;"></div>
<div class="r" style="left:1804.30px;top:1888.70px;width:2.00px;height:462.30px;background:#dddddd;"></div>
<div class="r" style="left:2028.70px;top:1888.70px;width:2.00px;height:462.30px;background:#dddddd;"></div>
<div class="r" style="left:2309.50px;top:1888.70px;width:2.00px;height:462.30px;background:#dddddd;"></div>
<div class="r" style="left:448.50px;top:1888.00px;width:2208.50px;height:2.00px;background:#dddddd;"></div>
<div class="r" style="left:448.50px;top:1946.40px;width:2208.50px;height:2.00px;background:#dddddd;"></div>
<div class="r" style="left:448.50px;top:2027.40px;width:2208.50px;height:2.00px;background:#dddddd;"></div>
<div class="r" style="left:448.50px;top:2108.30px;width:2208.50px;height:2.00px;background:#dddddd;"></div>
<div class="r" style="left:448.50px;top:2189.40px;width:2208.50px;height:2.00px;background:#dddddd;"></div>
<div class="r" style="left:448.50px;top:2270.30px;width:2208.50px;height:2.00px;background:#dddddd;"></div>
<div class="t" style="left:462.40px;top:1837.16px;font-size:33.6px;line-height:42.0px;font-weight:bold;color:#3a3a3a;">Segment</div>
<div class="t" style="left:693.00px;top:1799.56px;font-size:33.6px;line-height:42.0px;font-weight:bold;color:#3a3a3a;">Product</div>
<div class="t" style="left:693.00px;top:1837.16px;font-size:33.6px;line-height:42.0px;font-weight:bold;color:#3a3a3a;">Name</div>
<div class="t" style="left:917.50px;top:1799.56px;font-size:33.6px;line-height:42.0px;font-weight:bold;color:#3a3a3a;">First Shift</div>
<div class="t" style="left:917.50px;top:1837.16px;font-size:33.6px;line-height:42.0px;font-weight:bold;color:#3a3a3a;">Capacity</div>
<div class="t" style="left:1368.00px;top:1799.56px;font-size:33.6px;line-height:42.0px;font-weight:bold;color:#3a3a3a;">First &amp; Second</div>
<div class="t" style="left:1368.00px;top:1837.16px;font-size:33.6px;line-height:42.0px;font-weight:bold;color:#3a3a3a;">Shift Capacity</div>
<div class="t" style="left:1818.80px;top:1799.56px;font-size:33.6px;line-height:42.0px;font-weight:bold;color:#3a3a3a;">Automation</div>
<div class="t" style="left:1818.80px;top:1837.16px;font-size:33.6px;line-height:42.0px;font-weight:bold;color:#3a3a3a;">Level</div>
<div class="t" style="left:2043.70px;top:1799.56px;font-size:33.6px;line-height:42.0px;font-weight:bold;color:#3a3a3a;">Cost to Double</div>
<div class="t" style="left:2043.70px;top:1837.16px;font-size:33.6px;line-height:42.0px;font-weight:bold;color:#3a3a3a;">Capacity</div>
<div class="t" style="left:2323.80px;top:1799.56px;font-size:33.6px;line-height:42.0px;font-weight:bold;color:#3a3a3a;">Cost to Raise</div>
<div class="t" style="left:2323.80px;top:1837.16px;font-size:33.6px;line-height:42.0px;font-weight:bold;color:#3a3a3a;">Automation to 10.0</div>
<div class="t" style="left:917.50px;top:1896.56px;font-size:33.6px;line-height:42.0px;font-weight:bold;color:#3a3a3a;">Company</div>
<div class="t" style="left:1143.30px;top:1896.56px;font-size:33.6px;line-height:42.0px;font-weight:bold;color:#3a3a3a;">Industry</div>
<div class="t" style="left:1368.00px;top:1896.56px;font-size:33.6px;line-height:42.0px;font-weight:bold;color:#3a3a3a;">Company</div>
<div class="t" style="left:1593.00px;top:1896.56px;font-size:33.6px;line-height:42.0px;font-weight:bold;color:#3a3a3a;">Industry</div>
<div class="t" style="left:462.40px;top:1967.56px;font-size:33.6px;line-height:42.0px;color:#3c3c3c;">Traditional</div>
<div class="r" style="left:691px;top:1959.2px;width:200px;height:59px;background:#ececec;border:2.1px solid #8fca55;border-radius:7px;box-shadow:inset 0 2px 3px rgba(0,0,0,.08);"></div>
<div class="r" style="left:916.5px;top:1959.2px;width:200.5px;height:59px;background:#ccfc9a;border:2.1px solid #8fca55;border-radius:7px;box-shadow:inset 0 2px 3px rgba(0,0,0,.08);"></div>
<div class="r" style="left:1142.8px;top:1959.2px;width:199.20000000000005px;height:59px;background:#ccfc9a;border:2.1px solid #8fca55;border-radius:7px;box-shadow:inset 0 2px 3px rgba(0,0,0,.08);"></div>
<div class="r" style="left:1368px;top:1959.2px;width:199px;height:59px;background:#ccfc9a;border:2.1px solid #8fca55;border-radius:7px;box-shadow:inset 0 2px 3px rgba(0,0,0,.08);"></div>
<div class="r" style="left:1593px;top:1959.2px;width:199px;height:59px;background:#ccfc9a;border:2.1px solid #8fca55;border-radius:7px;box-shadow:inset 0 2px 3px rgba(0,0,0,.08);"></div>
<div class="r" style="left:1818px;top:1959.2px;width:199px;height:59px;background:#ccfc9a;border:2.1px solid #8fca55;border-radius:7px;box-shadow:inset 0 2px 3px rgba(0,0,0,.08);"></div>
<div class="r" style="left:2043px;top:1959.2px;width:254.4000000000001px;height:59px;background:#ccfc9a;border:2.1px solid #8fca55;border-radius:7px;box-shadow:inset 0 2px 3px rgba(0,0,0,.08);"></div>
<div class="r" style="left:2323.5px;top:1959.2px;width:321.0px;height:59px;background:#ccfc9a;border:2.1px solid #8fca55;border-radius:7px;box-shadow:inset 0 2px 3px rgba(0,0,0,.08);"></div>
<div class="t" style="left:707.80px;top:1966.20px;font-size:35px;line-height:43.75px;font-weight:bold;color:#444;">Able</div>
<div class="t" style="left:934.00px;top:1966.20px;font-size:35px;line-height:43.75px;font-weight:bold;color:#444;">1800</div>
<div class="t" style="left:1160.00px;top:1966.20px;font-size:35px;line-height:43.75px;font-weight:bold;color:#444;">38</div>
<div class="t" style="left:462.40px;top:2047.96px;font-size:33.6px;line-height:42.0px;color:#3c3c3c;">Low End</div>
<div class="r" style="left:691px;top:2040.2px;width:200px;height:59px;background:#ececec;border:2.1px solid #8fca55;border-radius:7px;box-shadow:inset 0 2px 3px rgba(0,0,0,.08);"></div>
<div class="r" style="left:916.5px;top:2040.2px;width:200.5px;height:59px;background:#ccfc9a;border:2.1px solid #8fca55;border-radius:7px;box-shadow:inset 0 2px 3px rgba(0,0,0,.08);"></div>
<div class="r" style="left:1142.8px;top:2040.2px;width:199.20000000000005px;height:59px;background:#ccfc9a;border:2.1px solid #8fca55;border-radius:7px;box-shadow:inset 0 2px 3px rgba(0,0,0,.08);"></div>
<div class="r" style="left:1368px;top:2040.2px;width:199px;height:59px;background:#ccfc9a;border:2.1px solid #8fca55;border-radius:7px;box-shadow:inset 0 2px 3px rgba(0,0,0,.08);"></div>
<div class="r" style="left:1593px;top:2040.2px;width:199px;height:59px;background:#ccfc9a;border:2.1px solid #8fca55;border-radius:7px;box-shadow:inset 0 2px 3px rgba(0,0,0,.08);"></div>
<div class="r" style="left:1818px;top:2040.2px;width:199px;height:59px;background:#ccfc9a;border:2.1px solid #8fca55;border-radius:7px;box-shadow:inset 0 2px 3px rgba(0,0,0,.08);"></div>
<div class="r" style="left:2043px;top:2040.2px;width:254.4000000000001px;height:59px;background:#ccfc9a;border:2.1px solid #8fca55;border-radius:7px;box-shadow:inset 0 2px 3px rgba(0,0,0,.08);"></div>
<div class="r" style="left:2323.5px;top:2040.2px;width:321.0px;height:59px;background:#ccfc9a;border:2.1px solid #8fca55;border-radius:7px;box-shadow:inset 0 2px 3px rgba(0,0,0,.08);"></div>
<div class="t" style="left:707.80px;top:2046.60px;font-size:35px;line-height:43.75px;font-weight:bold;color:#444;">Acre</div>
<div class="t" style="left:934.00px;top:2046.60px;font-size:35px;line-height:43.75px;font-weight:bold;color:#444;">1400</div>
<div class="t" style="left:1160.00px;top:2046.60px;font-size:35px;line-height:43.75px;font-weight:bold;color:#444;">20</div>
<div class="t" style="left:462.40px;top:2128.56px;font-size:33.6px;line-height:42.0px;color:#3c3c3c;">High End</div>
<div class="r" style="left:691px;top:2119.9px;width:200px;height:59px;background:#ececec;border:2.1px solid #8fca55;border-radius:7px;box-shadow:inset 0 2px 3px rgba(0,0,0,.08);"></div>
<div class="r" style="left:916.5px;top:2119.9px;width:200.5px;height:59px;background:#ececec;border:2.1px solid #8fca55;border-radius:7px;box-shadow:inset 0 2px 3px rgba(0,0,0,.08);"></div>
<div class="r" style="left:1142.8px;top:2119.9px;width:199.20000000000005px;height:59px;background:#ececec;border:2.1px solid #8fca55;border-radius:7px;box-shadow:inset 0 2px 3px rgba(0,0,0,.08);"></div>
<div class="r" style="left:1368px;top:2119.9px;width:199px;height:59px;background:#ececec;border:2.1px solid #8fca55;border-radius:7px;box-shadow:inset 0 2px 3px rgba(0,0,0,.08);"></div>
<div class="r" style="left:1593px;top:2119.9px;width:199px;height:59px;background:#ececec;border:2.1px solid #8fca55;border-radius:7px;box-shadow:inset 0 2px 3px rgba(0,0,0,.08);"></div>
<div class="r" style="left:1818px;top:2119.9px;width:199px;height:59px;background:#ececec;border:2.1px solid #8fca55;border-radius:7px;box-shadow:inset 0 2px 3px rgba(0,0,0,.08);"></div>
<div class="r" style="left:2043px;top:2119.9px;width:254.4000000000001px;height:59px;background:#ececec;border:2.1px solid #8fca55;border-radius:7px;box-shadow:inset 0 2px 3px rgba(0,0,0,.08);"></div>
<div class="r" style="left:2323.5px;top:2119.9px;width:321.0px;height:59px;background:#ececec;border:2.1px solid #8fca55;border-radius:7px;box-shadow:inset 0 2px 3px rgba(0,0,0,.08);"></div>
<div class="t" style="left:707.80px;top:2127.20px;font-size:35px;line-height:43.75px;font-weight:bold;color:#444;">Adam</div>
<div class="t" style="left:934.00px;top:2127.20px;font-size:35px;line-height:43.75px;font-weight:bold;color:#444;">900</div>
<div class="t" style="left:462.40px;top:2208.16px;font-size:33.6px;line-height:42.0px;color:#3c3c3c;">Performance</div>
<div class="r" style="left:691px;top:2200.6px;width:200px;height:59px;background:#ececec;border:2.1px solid #8fca55;border-radius:7px;box-shadow:inset 0 2px 3px rgba(0,0,0,.08);"></div>
<div class="r" style="left:916.5px;top:2200.6px;width:200.5px;height:59px;background:#ececec;border:2.1px solid #8fca55;border-radius:7px;box-shadow:inset 0 2px 3px rgba(0,0,0,.08);"></div>
<div class="r" style="left:1142.8px;top:2200.6px;width:199.20000000000005px;height:59px;background:#ececec;border:2.1px solid #8fca55;border-radius:7px;box-shadow:inset 0 2px 3px rgba(0,0,0,.08);"></div>
<div class="r" style="left:1368px;top:2200.6px;width:199px;height:59px;background:#ececec;border:2.1px solid #8fca55;border-radius:7px;box-shadow:inset 0 2px 3px rgba(0,0,0,.08);"></div>
<div class="r" style="left:1593px;top:2200.6px;width:199px;height:59px;background:#ececec;border:2.1px solid #8fca55;border-radius:7px;box-shadow:inset 0 2px 3px rgba(0,0,0,.08);"></div>
<div class="r" style="left:1818px;top:2200.6px;width:199px;height:59px;background:#ececec;border:2.1px solid #8fca55;border-radius:7px;box-shadow:inset 0 2px 3px rgba(0,0,0,.08);"></div>
<div class="r" style="left:2043px;top:2200.6px;width:254.4000000000001px;height:59px;background:#ececec;border:2.1px solid #8fca55;border-radius:7px;box-shadow:inset 0 2px 3px rgba(0,0,0,.08);"></div>
<div class="r" style="left:2323.5px;top:2200.6px;width:321.0px;height:59px;background:#ececec;border:2.1px solid #8fca55;border-radius:7px;box-shadow:inset 0 2px 3px rgba(0,0,0,.08);"></div>
<div class="t" style="left:707.80px;top:2206.80px;font-size:35px;line-height:43.75px;font-weight:bold;color:#444;">Aft</div>
<div class="t" style="left:934.00px;top:2206.80px;font-size:35px;line-height:43.75px;font-weight:bold;color:#444;">600</div>
<div class="t" style="left:462.40px;top:2288.96px;font-size:33.6px;line-height:42.0px;color:#3c3c3c;">Size</div>
<div class="r" style="left:691px;top:2281.5px;width:200px;height:59px;background:#ececec;border:2.1px solid #8fca55;border-radius:7px;box-shadow:inset 0 2px 3px rgba(0,0,0,.08);"></div>
<div class="r" style="left:916.5px;top:2281.5px;width:200.5px;height:59px;background:#ececec;border:2.1px solid #8fca55;border-radius:7px;box-shadow:inset 0 2px 3px rgba(0,0,0,.08);"></div>
<div class="r" style="left:1142.8px;top:2281.5px;width:199.20000000000005px;height:59px;background:#ececec;border:2.1px solid #8fca55;border-radius:7px;box-shadow:inset 0 2px 3px rgba(0,0,0,.08);"></div>
<div class="r" style="left:1368px;top:2281.5px;width:199px;height:59px;background:#ececec;border:2.1px solid #8fca55;border-radius:7px;box-shadow:inset 0 2px 3px rgba(0,0,0,.08);"></div>
<div class="r" style="left:1593px;top:2281.5px;width:199px;height:59px;background:#ececec;border:2.1px solid #8fca55;border-radius:7px;box-shadow:inset 0 2px 3px rgba(0,0,0,.08);"></div>
<div class="r" style="left:1818px;top:2281.5px;width:199px;height:59px;background:#ececec;border:2.1px solid #8fca55;border-radius:7px;box-shadow:inset 0 2px 3px rgba(0,0,0,.08);"></div>
<div class="r" style="left:2043px;top:2281.5px;width:254.4000000000001px;height:59px;background:#ececec;border:2.1px solid #8fca55;border-radius:7px;box-shadow:inset 0 2px 3px rgba(0,0,0,.08);"></div>
<div class="r" style="left:2323.5px;top:2281.5px;width:321.0px;height:59px;background:#ececec;border:2.1px solid #8fca55;border-radius:7px;box-shadow:inset 0 2px 3px rgba(0,0,0,.08);"></div>
<div class="t" style="left:707.80px;top:2287.60px;font-size:35px;line-height:43.75px;font-weight:bold;color:#444;">Agape</div>
<div class="t" style="left:934.00px;top:2287.60px;font-size:35px;line-height:43.75px;font-weight:bold;color:#444;">600</div>
<div class="r" style="left:1367px;top:1943.2px;width:364px;height:90px;background:#fff;border:2px solid rgba(0,0,0,.2);border-radius:10px;box-shadow:0 5px 12px rgba(0,0,0,.2);"></div>
<svg class="r" style="left:1340px;top:1963.2px" width="30" height="52" viewBox="0 0 30 52"><polygon points="29,0 2.4,25 29,50" fill="#fff" stroke="rgba(0,0,0,.35)" stroke-width="2"/><rect x="28" y="0" width="3" height="52" fill="#fff"/></svg>
<div class="t" style="left:1404.50px;top:1969.71px;font-size:28.4px;line-height:35.5px;color:#111;">Incorrect value entered</div>
<div class="r" style="left:1367px;top:2024.2px;width:364px;height:90px;background:#fff;border:2px solid rgba(0,0,0,.2);border-radius:10px;box-shadow:0 5px 12px rgba(0,0,0,.2);"></div>
<svg class="r" style="left:1340px;top:2044.2px" width="30" height="52" viewBox="0 0 30 52"><polygon points="29,0 2.4,25 29,50" fill="#fff" stroke="rgba(0,0,0,.35)" stroke-width="2"/><rect x="28" y="0" width="3" height="52" fill="#fff"/></svg>
<div class="t" style="left:1404.50px;top:2050.71px;font-size:28.4px;line-height:35.5px;color:#111;">Incorrect value entered</div>
<div class="r" style="left:0.00px;top:2366.70px;width:2790.00px;height:34.30px;background:#2f2b28;"></div>
<div class="r" style="left:1107.00px;top:2366.70px;width:180.00px;height:34.30px;background:#5b5451;"></div>
<div class="r" style="left:1287.00px;top:2366.70px;width:12.00px;height:34.30px;background:#3c3836;"></div>
<div class="r" style="left:0px;top:2390.4px;width:62px;height:62px;border-radius:50%;background:linear-gradient(90deg,#1fb5e8,#34d07a);"></div>
<div class="r" style="left:198.00px;top:2400.00px;width:24.00px;height:1.00px;background:#9b7a2e;"></div>
<div class="r" style="left:402px;top:2391px;width:42px;height:20px;border:3.5px solid #27a9f1;border-radius:3px;"></div>
<div class="r" style="left:610px;top:2400px;width:28px;height:28px;transform:rotate(45deg);border-radius:5px;background:#29a8e8;"></div>
<div class="r" style="left:791px;top:2400px;width:42px;height:42px;transform:rotate(45deg);border-radius:6px;background:linear-gradient(90deg,#b463e0,#3a78e0 40%,#3f8fe8);"></div>
<div class="r" style="left:981px;top:2392px;width:64px;height:64px;border-radius:50%;background:#22c35e;"></div>
<div class="r" style="left:1169px;top:2390.5px;width:66px;height:66px;border-radius:50%;background:#e53b2c;"></div>
<div class="r" style="left:1371px;top:2390.5px;width:54px;height:30px;background:#8b949c;border-radius:3px;"><div style="margin:5px 5px 0;height:20px;background:#3cc0f0"></div></div>
<div class="r" style="left:1560px;top:2390.5px;width:66px;height:66px;border-radius:50%;background:#e53b2c;"></div>
<div class="r" style="left:1755px;top:2390.5px;width:66px;height:66px;border-radius:50%;background:#e53b2c;"></div>
<div class="r" style="left:2310px;top:2390.5px;width:44px;height:44px;border-radius:50%;background:#c9271f;"></div>
</body></html>
